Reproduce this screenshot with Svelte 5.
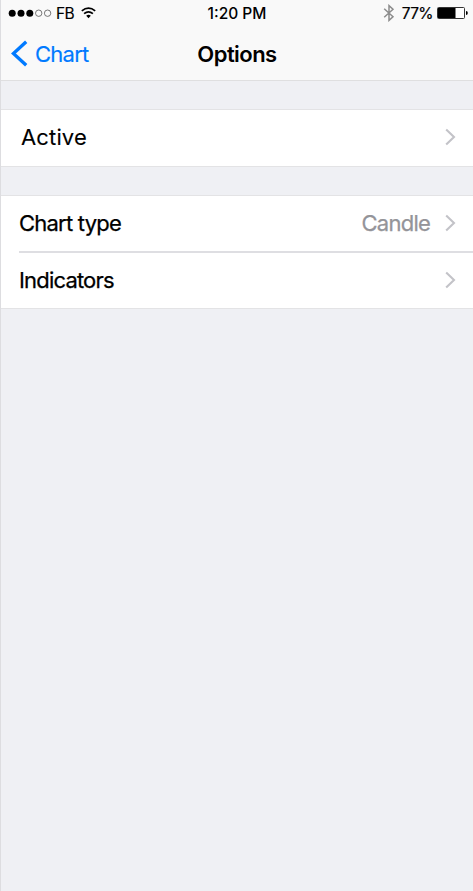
<script>
  const groups = [
    [{ label: 'Active', value: '', cls: 'active' }],
    [
      { label: 'Chart type', value: 'Candle', cls: 'type' },
      { label: 'Indicators', value: '', cls: 'indicators' }
    ]
  ];
</script>

<div class="screen">
  <header>
    <div class="status">
      <div class="side">
        <svg class="dots" width="44" height="10" viewBox="0 0 44 10">
          <circle cx="4.2" cy="4.2" r="3.5" />
          <circle cx="13" cy="4.2" r="3.5" />
          <circle cx="21.8" cy="4.2" r="3.5" />
          <circle cx="30.7" cy="4.2" r="3.2" fill="none" stroke="#555" stroke-width=".8" />
          <circle cx="39.6" cy="4.2" r="3.2" fill="none" stroke="#555" stroke-width=".8" />
        </svg>
        <span class="carrier">FB</span>
        <svg class="wifi" width="15" height="12" viewBox="0 0 15 12">
          <path d="M.8 3.9Q7.5-1.5 14.2 3.9M3.1 6.6Q7.5 3 11.9 6.6" fill="none" stroke="#000" stroke-width="1.7" />
          <path d="M5.2 8.8Q7.5 6.9 9.8 8.8L7.5 11.2Z" />
        </svg>
      </div>
      <span class="time">1:20 PM</span>
      <div class="side right">
        <svg class="bt" width="12" height="18" viewBox="0 0 12 18">
          <path d="M1.2 4.8L10 12.7L6 16.4V1.6L10 5.2L1.2 13.2" fill="none" stroke="#8c8c8c" stroke-width="1.5" />
        </svg>
        <span class="percent">77%</span>
        <svg class="battery" width="31" height="12" viewBox="0 0 31 12">
          <rect x=".5" y=".5" width="27" height="11" rx="1" fill="#fff" stroke="#333" />
          <rect x="1" y="1" width="17.5" height="10" />
          <path d="M29 4Q30.8 4.2 30.8 6T29 8Z" />
        </svg>
      </div>
    </div>
    <nav>
      <div class="back">
        <svg width="17" height="28" viewBox="0 0 17 28">
          <path d="M15.2 1.8L2.4 13.5L15.2 25.2" fill="none" stroke="#007aff" stroke-width="3.4" />
        </svg>
        <span>Chart</span>
      </div>
      <h1>Options</h1>
      <div></div>
    </nav>
  </header>

  {#each groups as rows}
    <section>
      {#each rows as row}
        <div class="row {row.cls}">
          <span class="label">{row.label}</span>
          <span class="value">{row.value}</span>
          <svg width="11" height="18" viewBox="0 0 11 18">
            <path d="M1.2 1.5L9 9L1.2 16.5" fill="none" stroke="#c3c3c8" stroke-width="2.1" />
          </svg>
        </div>
      {/each}
    </section>
  {/each}
</div>

<style>
  :global(body) { background: #eff0f4; }
  .screen {
    box-sizing: border-box;
    height: 891px;
    border-left: 1px solid #dddde0;
    background: #eff0f4;
    color: #000;
    font-family: Inter, "Liberation Sans", sans-serif;
    overflow: hidden;
  }
  svg { display: block; flex: none; }
  span, h1 { white-space: nowrap; }
  header {
    box-sizing: border-box;
    height: 81px;
    background: #f9f9f9;
    border-bottom: 1px solid #dfdfe0;
  }
  .status, nav {
    display: grid;
    grid-template-columns: 1fr auto 1fr;
    align-items: center;
  }
  .status { height: 27px; font-size: 15.5px; }
  .side { display: flex; align-items: center; padding-left: 7px; }
  .right { justify-content: flex-end; padding: 0 5px 0 0; }
  .carrier { margin-left: 4px; letter-spacing: -.6px; -webkit-text-stroke: .15px; }
  .wifi { margin: 0 0 2px 7px; }
  .time { font-weight: 500; letter-spacing: 0; }
  .bt { margin-bottom: 1px; }
  .percent { margin: 0 4px 0 7px; letter-spacing: -.6px; -webkit-text-stroke: .2px; }
  .battery { margin-bottom: 1px; }
  nav { height: 54px; }
  .back {
    display: flex;
    align-items: center;
    gap: 7px;
    padding-left: 10px;
    color: #007aff;
    font-size: 22px;
    letter-spacing: -.75px;
    -webkit-text-stroke: .15px;
  }
  h1 { margin: 0; font-size: 22px; font-weight: 600; letter-spacing: -.55px; }
  section {
    margin-top: 28px;
    background: #fff;
    border: solid #e3e3e5;
    border-width: 1px 0;
  }
  .row {
    box-sizing: border-box;
    display: flex;
    align-items: center;
    height: 55px;
    padding: 0 17px 1px 0;
    font-size: 22px;
    letter-spacing: -.77px;
    -webkit-text-stroke: .25px;
  }
  .active { padding: 0 17px 2px 20px; height: 56px; letter-spacing: .15px; -webkit-text-stroke: .1px; }
  .type, .indicators { margin-left: 18px; }
  .indicators { height: 57px; padding-bottom: 2px; border-top: 2px solid #dedee2; letter-spacing: -.82px; }
  .value { margin-left: auto; margin-right: 15px; color: #949499; }
</style>
